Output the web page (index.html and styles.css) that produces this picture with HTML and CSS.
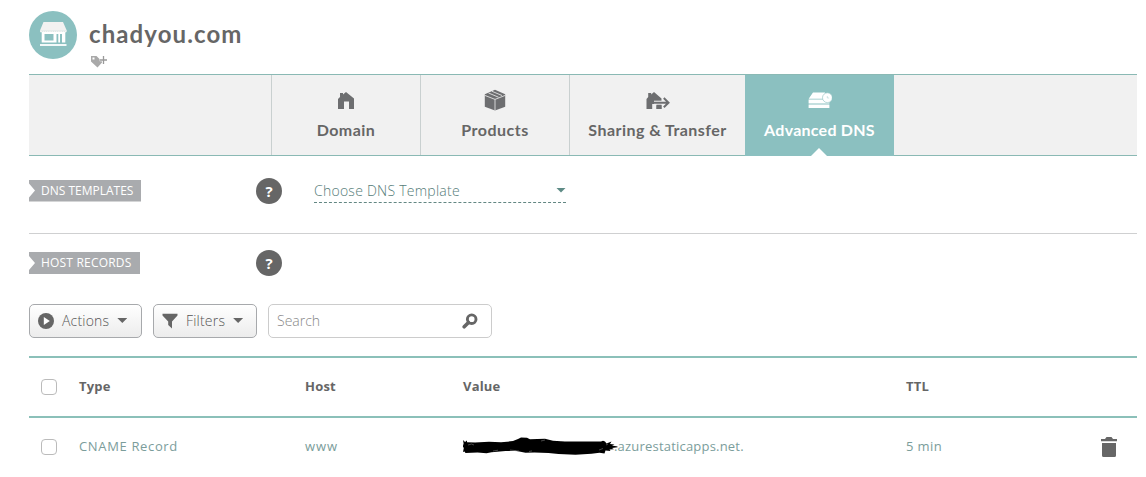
FILE: index.html
```html
<!DOCTYPE html>
<html lang="en">
<head>
<meta charset="utf-8">
<title>chadyou.com</title>
<link rel="stylesheet" href="styles.css">
</head>
<body>
<main class="page">
  <header class="header">
    <svg class="logo" viewBox="0 0 48 48">
      <circle cx="24" cy="24" r="24" fill="#8bc0c0"/>
      <path d="M14.500 11H34l3.700 8.500H11z" fill="#f3f2f1"/>
      <path d="M11 19.300h26.700v1.200q-1.100 1.800-2.200 0-1.100 1.800-2.300 0-1.100 1.800-2.200 0-1.100 1.800-2.200 0-1.100 1.800-2.200 0-1.100 1.800-2.300 0-1.100 1.800-2.200 0-1.100 1.800-2.200 0-1.100 1.800-2.200 0-1.100 1.800-2.200 0-1.100 1.800-2.300 0-1.100 1.800-2.200 0z" fill="#f3f2f1"/>
      <path d="M12.700 21h23.600v10.500H12.700zM15.500 23v6.500h9V23zm12 0v8.500h1.800V23zm3.500 0v8.500h2V23z" fill="#fff" fill-rule="evenodd"/>
      <path d="M11 34h26.500" stroke="#fff" stroke-width="1.800"/>
    </svg>
    <div class="heading">
      <h1 class="title">chadyou.com</h1>
      <svg class="tag" viewBox="0 0 17 13"><path fill="#a9a9a9" fill-rule="evenodd" d="M0 1h5.500l6 6-5 5.500L0 6.500zm1.500 1.500v2h2v-2z"/><path d="M12.500 0v9.500M8.700 5H17" stroke="#fff" stroke-width="2.600"/><path d="M12.500 1v8M9 5h7" stroke="#999" stroke-width="1.300"/></svg>
    </div>
  </header>

  <nav class="tabs">
    <a class="tab"><svg viewBox="0 0 24 22"><path fill="#6d6e70" d="M4 10l2-2V4h3v1.500L12 3l8 6.500V20h-5v-7.500h-5V20H4z"/></svg><span class="t-domain">Domain</span></a>
    <a class="tab"><svg viewBox="0 0 24 22"><path fill="#6d6e70" d="M1.800 5.200L12 .8l10.200 4.400v12.500L12 21.500 1.800 17.700z"/><path d="M1.800 6.400l10.200 4 10.200-4M12 10.500v11M5.500 4l10 4.200M9 2.300l10 4.200" fill="none" stroke="#f1f1f1" stroke-width=".8"/></svg><span class="t-products">Products</span></a>
    <a class="tab"><svg viewBox="0 0 24 22"><path fill="#6d6e70" d="M.5 10l1.700-2V4h3v1.500L8 3l7.500 6.500V20h-5v-5H6.200v5H.5z"/><path d="M8 13.700h14" fill="none" stroke="#f1f1f1" stroke-width="4"/><path d="M6 13.700h16M17.800 9l4.700 4.700-4.700 4.500" fill="none" stroke="#6d6e70" stroke-width="2"/><path d="M10.500 16.300h5V20h-5z" fill="#6d6e70"/></svg><span class="t-sharing">Sharing &amp; Transfer</span></a>
    <a class="tab active"><svg viewBox="0 0 24 22"><path fill="#fff" d="M5 3.500h12V9.700H.7zM.6 10.600h20.800v4H.6zM.6 15.500h20.800V19H.6z"/><circle cx="19.400" cy="8.700" r="4.900" fill="#fff" stroke="#8bc0c0" stroke-width=".6"/><path d="M19.300 7V9h1.800" fill="none" stroke="#8bc0c0" stroke-width=".4"/></svg><span class="t-dns">Advanced DNS</span></a>
  </nav>

  <section class="templates">
    <div class="label-cell"><span class="ribbon r-dns">DNS TEMPLATES</span></div>
    <span class="help">?</span>
    <div class="select"><span>Choose DNS Template</span><i class="caret teal"></i></div>
  </section>

  <section class="records">
    <div class="label-cell"><span class="ribbon r-host">HOST RECORDS</span></div>
    <span class="help">?</span>
  </section>

  <div class="toolbar">
    <button class="btn actions"><svg viewBox="0 0 16 16"><circle cx="8" cy="8" r="8" fill="#666"/><path d="M5.800 4v8l6-4z" fill="#fff"/></svg><span>Actions</span><i class="caret"></i></button>
    <button class="btn filters"><svg viewBox="0 0 16 16"><path d="M.5.8h15v1.800L10 8.500v7L6.200 12V8.500L.5 2.600z" fill="#666"/></svg><span>Filters</span><i class="caret"></i></button>
    <div class="search"><span>Search</span><svg viewBox="0 0 16 16"><circle cx="9.700" cy="6.200" r="4.300" fill="none" stroke="#666" stroke-width="2.900"/><path d="M6.500 9.500l-4.300 4.300" stroke="#666" stroke-width="3.600" stroke-linecap="round"/></svg></div>
  </div>

  <div class="table">
    <div class="row head">
      <i class="check"></i><span>Type</span><span>Host</span><span>Value</span><span>TTL</span>
    </div>
    <div class="row">
      <i class="check"></i><span class="c-type">CNAME Record</span><span class="c-host">www</span>
      <div class="value"><svg class="redaction" viewBox="0 0 155 22"><path d="M0 4l2 2 2-1.500v1.800l8 .2 14-.7 12 .5 12-1.200L55 3l3-1.500 6 .3 3 1.500 15-.5 8 2 12 .8 20-.2h16l2-.6 2 .6 1.500 2 5-1.800-1.500 2.500 4.500.5-2.500 1 5.500.8v.8l-5.500.7 2 1.400-4.500.2 1 1.500-5-.5-1 3-5-.8-8 1-16 1-17-.7-10-1-14-.5-9 .3-10-2-10 .3-14 1.200-5 1-9-.8-12 .5-1-1.500L0 16l.8-4-1-1.500.8-3z"/><path d="M5 9q4-2 6 0M30 15l5-.8M47 14l9 1M66 15.500l3-.6M78 5l4-1M136 14l4-1.500M143 9l2-1" fill="none" stroke="#777" stroke-width=".6"/></svg><span class="c-value">.azurestaticapps.net.</span></div>
      <span class="c-ttl">5 min</span>
      <svg class="trash" viewBox="0 0 16 20"><path d="M0 2h4L5.500 0h5L12 2h4v2.300H0zM1 6h14v12.500q0 1.500-1.500 1.500h-11Q1 20 1 18.500z" fill="#666"/></svg>
    </div>
  </div>
</main>
</body>
</html>
```
FILE: styles.css
```css
* { box-sizing: border-box; }
body { margin: 0; background: #fff; color: #6d6e70; font-family: "Open Sans", "Noto Sans", sans-serif; font-size: 13px; overflow: hidden; }
.page { width: 1137px; height: 477px; padding: 11px 0 0 29px; }
span { white-space: nowrap; }

.header { display: flex; height: 63px; gap: 12px; }
.logo { width: 48px; height: 48px; }
.title { margin: 7px 0 0; font: bold 24px/32px Lato, sans-serif; letter-spacing: 1.1px; color: #666; }
.tag { display: block; width: 17px; height: 13px; margin: 5px 0 0 2px; }

.tabs { display: flex; height: 82px; padding-left: 242px; background: #f1f1f1; border-top: 1px solid #8ab9b4; border-bottom: 1px solid #8ab9b4; }
.tab { display: flex; flex-direction: column; align-items: center; width: 149px; padding-top: 14px; gap: 7px; border-left: 1px solid #c9d0d0; font: bold 16px/24px Lato, sans-serif; color: #666; }
.tab svg { width: 24px; height: 22px; }
.tab:nth-child(3) { width: 176px; }
.tab.active { position: relative; width: 149px; height: 81px; border-left: 0; background: #8bc0c0; color: #fff; }
.tab.active::after { content: ""; position: absolute; left: 66px; bottom: 0; border: 8px solid transparent; border-top: 0; border-bottom-color: #fff; }
.t-domain { letter-spacing: .45px; }
.t-products { letter-spacing: .5px; }
.t-sharing { letter-spacing: .45px; }
.t-dns { letter-spacing: .25px; }

.templates, .records { display: flex; align-items: center; }
.templates { height: 78px; padding-bottom: 8px; border-bottom: 1px solid #cfd0d1; }
.records { height: 58px; }
.label-cell { width: 227px; }
.ribbon { display: inline-block; height: 22px; padding-left: 12px; background: #a9abae; clip-path: polygon(0 0, 100% 0, 100% 100%, 0 100%, 0 82%, 6px 50%, 0 18%); color: #fff; font-size: 12px; line-height: 22px; vertical-align: middle; }
.r-dns { width: 112px; }
.r-host { width: 111px; letter-spacing: .2px; }
.help { width: 26px; height: 26px; border-radius: 50%; background: #666; color: #fff; font: bold 15px/26px "Open Sans", sans-serif; text-align: center; }
.select { display: flex; align-items: center; justify-content: space-between; width: 252px; height: 25px; margin-left: 32px; border-bottom: 1px dashed #638783; color: #557c78; font-size: 14px; font-weight: 300; letter-spacing: .25px; }
.caret { width: 10px; height: 5px; background: #666; clip-path: polygon(0 0, 100% 0, 50% 100%); }
.teal { background: #5e8b86; }

.toolbar { display: flex; gap: 11px; height: 64px; padding-top: 12px; }
.btn { display: flex; align-items: center; height: 34px; padding: 0 0 1px 8px; border: 1px solid #a7a9ac; border-radius: 5px; background: linear-gradient(#fff, #ececec); color: #555; font: 300 14px "Open Sans", sans-serif; letter-spacing: .2px; }
.btn svg { width: 16px; height: 16px; }
.btn span { margin: 0 8px; }
.actions { width: 113px; }
.filters { width: 104px; }
.search { display: flex; align-items: center; justify-content: space-between; width: 224px; height: 34px; padding: 0 13px 1px 8px; border: 1px solid #ccc; border-radius: 5px; color: #888; font-size: 14px; font-weight: 300; }
.search svg { width: 16px; height: 16px; }

.table { border-top: 2px solid #8bc0b9; }
.row { display: grid; grid-template-columns: 38px 226px 158px 443px 195px 16px; align-items: center; height: 58px; padding-left: 12px; color: #7b9d9b; font-size: 13px; }
.row span { padding-bottom: 2px; }
.head { height: 60px; border-bottom: 2px solid #8bc0b9; color: #666; font-weight: bold; letter-spacing: .2px; }
.check { width: 16px; height: 16px; border: 1px solid #bbb; border-radius: 4px; }
.c-type { letter-spacing: .65px; }
.c-host { letter-spacing: .9px; }
.c-value { letter-spacing: .2px; }
.c-ttl { letter-spacing: .4px; }
.value { display: flex; align-items: center; }
.redaction { position: relative; flex: none; width: 155px; height: 22px; margin-right: -4px; }
.trash { width: 16px; height: 20px; }
```
